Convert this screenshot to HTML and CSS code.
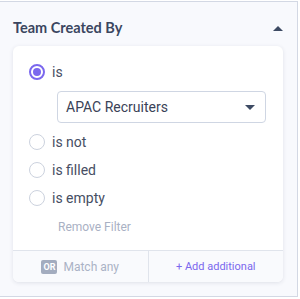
FILE: index.html
```html
<!DOCTYPE html>
<html lang="en">
<head>
    <meta charset="UTF-8">
    <title>Team Created By</title>
    <link rel="stylesheet" href="styles.css">
</head>
<body>
    <div class="panel">
        <div class="panel-head">
            <h3>Team Created By</h3>
            <span class="caret-up"></span>
        </div>

        <div class="filter-card">
            <div class="filter-body">
                <label class="option">
                    <span class="radio checked"></span>
                    <span>is</span>
                </label>
                <div class="select">
                    <span>APAC Recruiters</span>
                    <span class="caret-down"></span>
                </div>
                <label class="option">
                    <span class="radio"></span>
                    <span>is not</span>
                </label>
                <label class="option">
                    <span class="radio"></span>
                    <span>is filled</span>
                </label>
                <label class="option">
                    <span class="radio"></span>
                    <span>is empty</span>
                </label>
                <a href="#" class="remove-filter">Remove Filter</a>
            </div>
            <div class="filter-footer">
                <div class="match-any">
                    <span class="badge-or">OR</span>
                    <span>Match any</span>
                </div>
                <a href="#" class="add-additional">+ Add additional</a>
            </div>
        </div>
    </div>
</body>
</html>
```

FILE: styles.css
```css
body {
    margin: 0;
    padding: 0;
    background-color: #ffffff;
    font-family: Roboto, sans-serif;
}

.panel {
    box-sizing: border-box;
    width: 298px;
    height: 296px;
    margin-top: 1px;
    background-color: #f8f9fd;
    border-top: 1px solid #d3d8e4;
    border-right: 1px solid #d3d8e4;
    border-bottom: 1px solid #d3d8e4;
    padding-top: 16px;
}

.panel-head {
    display: flex;
    justify-content: space-between;
    align-items: center;
    height: 20px;
    padding: 0 14px 0 13px;
    margin-bottom: 8px;
}

.panel-head h3 {
    margin: 0;
    font-family: Lato, sans-serif;
    font-size: 14.5px;
    font-weight: 700;
    line-height: 20px;
    color: #3b4660;
}

.caret-up {
    width: 0;
    height: 0;
    border-left: 5px solid transparent;
    border-right: 5px solid transparent;
    border-bottom: 5px solid #3d4a63;
}

.filter-card {
    margin: 0 14px 0 13px;
    height: 236px;
    background-color: #ffffff;
    border-radius: 6px;
    box-shadow: 0 1px 4px rgba(40, 50, 80, 0.12);
    display: flex;
    flex-direction: column;
    overflow: hidden;
}

.filter-body {
    flex: 1;
    padding: 12px 17px 0 16px;
}

.option {
    display: flex;
    align-items: center;
    gap: 7px;
    height: 28px;
    font-size: 14px;
    color: #464e63;
}

.radio {
    box-sizing: border-box;
    width: 16px;
    height: 16px;
    border: 1px solid #ccd2de;
    border-radius: 50%;
    background-color: #ffffff;
}

.radio.checked {
    border: 2px solid #7b68ee;
    display: flex;
    align-items: center;
    justify-content: center;
}

.radio.checked::after {
    content: "";
    width: 8px;
    height: 8px;
    border-radius: 50%;
    background-color: #7b68ee;
}

.select {
    box-sizing: border-box;
    height: 32px;
    margin: 5px 0 5px 28px;
    padding: 0 10px 0 8px;
    border: 1px solid #cfd6e3;
    border-radius: 4px;
    display: flex;
    justify-content: space-between;
    align-items: center;
    font-size: 14px;
    color: #3a4257;
}

.caret-down {
    width: 0;
    height: 0;
    border-left: 5px solid transparent;
    border-right: 5px solid transparent;
    border-top: 5px solid #3d4a63;
}

.remove-filter {
    display: block;
    margin: 7px 0 0 29px;
    font-size: 12px;
    line-height: 16px;
    color: #a9b1c4;
    text-decoration: none;
}

.filter-footer {
    display: flex;
    height: 31px;
    border-top: 1px solid #e0e4ec;
    background-color: #f9fafd;
}

.match-any, .add-additional {
    flex: 1;
    display: flex;
    align-items: center;
    justify-content: center;
    font-size: 12px;
}

.match-any {
    gap: 6px;
    color: #aab2c5;
    border-right: 1px solid #e0e4ec;
}

.badge-or {
    width: 16px;
    height: 14px;
    border-radius: 2px;
    background-color: #a3acbf;
    color: #ffffff;
    font-size: 9px;
    font-weight: 700;
    line-height: 14px;
    text-align: center;
}

.add-additional {
    font-size: 11px;
    color: #7b68ee;
    text-decoration: none;
}
```
